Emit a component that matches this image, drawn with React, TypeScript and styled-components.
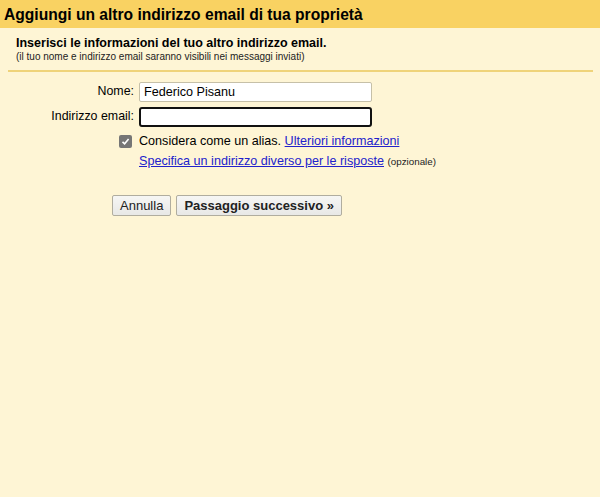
import * as React from "react"
import styled, { createGlobalStyle } from "styled-components"

const GlobalStyle = createGlobalStyle`
  html, body {
    margin: 0;
    padding: 0;
    background: #fef5d5;
    font-family: "Liberation Sans", Arial, sans-serif;
    color: #000;
  }
`

const Page = styled.div`
  width: 600px;
  height: 497px;
  background: #fef5d5;
  overflow: hidden;
`

const Header = styled.h1`
  margin: 0;
  height: 28px;
  padding: 0 4px;
  background: #f9d262;
  font-size: 15.6px;
  font-weight: 700;
  line-height: 30px;
  white-space: nowrap;
`

const Intro = styled.div`
  padding: 8px 16px 0;
`

const Subtitle = styled.h2`
  margin: 0;
  font-size: 12.5px;
  font-weight: 700;
  line-height: 15px;
`

const Note = styled.div`
  font-size: 10px;
  line-height: 12px;
  color: #222;
`

const Rule = styled.hr`
  margin: 7px 7px 0 8px;
  border: 0;
  height: 2px;
  background: #efd37a;
`

const Form = styled.div`
  display: grid;
  grid-template-columns: 127px 233px;
  column-gap: 5px;
  row-gap: 5px;
  padding: 10px 0 0 7px;
  align-items: center;
`

const Label = styled.label`
  font-size: 12.4px;
  text-align: right;
  line-height: 16px;
  align-self: start;
  padding-top: 1px;
`

const Input = styled.input<{ $focused?: boolean }>`
  box-sizing: border-box;
  width: 233px;
  height: 20px;
  margin: 0;
  padding: 1px 4px;
  font-family: "Liberation Sans", Arial, sans-serif;
  font-size: 12.6px;
  background: #fff;
  border: ${(p) => (p.$focused ? "2px solid #111" : "1px solid #c6c0a8")};
  border-radius: ${(p) => (p.$focused ? "3px" : "2px")};
  outline: none;
`

const CheckCell = styled.div`
  display: flex;
  justify-content: flex-end;
  padding-right: 2px;
  padding-top: 1px;
`

const Box = styled.span`
  display: flex;
  align-items: center;
  justify-content: center;
  width: 13px;
  height: 13px;
  border-radius: 2px;
  background: #767676;
`

const OptionText = styled.div<{ $top?: number }>`
  font-size: 12.6px;
  line-height: 15px;
  white-space: nowrap;
  padding-top: ${(p) => p.$top ?? 0}px;
`

const Link = styled.a`
  color: #2222cc;
  text-decoration: underline;
  cursor: pointer;
`

const Small = styled.span`
  font-size: 9.8px;
  color: #222;
`

const Actions = styled.div`
  display: flex;
  gap: 5px;
  padding: 26px 0 0 112px;
`

const Button = styled.button<{ $primary?: boolean }>`
  box-sizing: border-box;
  height: 21px;
  margin: 0;
  padding: 0 7px;
  font-family: "Liberation Sans", Arial, sans-serif;
  font-size: 13px;
  font-weight: ${(p) => (p.$primary ? 700 : 400)};
  color: #222;
  background: linear-gradient(#f6f6f4, #e8e8e6);
  border: 1px solid #b0ad9f;
  border-radius: 2px;
`

export default function App() {
  return (
    <Page>
      <GlobalStyle />
      <Header>Aggiungi un altro indirizzo email di tua proprietà</Header>
      <Intro>
        <Subtitle>Inserisci le informazioni del tuo altro indirizzo email.</Subtitle>
        <Note>(il tuo nome e indirizzo email saranno visibili nei messaggi inviati)</Note>
      </Intro>
      <Rule />
      <Form>
        <Label>Nome:</Label>
        <Input defaultValue="Federico Pisanu" />
        <Label>Indirizzo email:</Label>
        <Input $focused />
        <CheckCell>
          <Box>
            <svg width="9" height="9" viewBox="0 0 9 9">
              <path d="M1.5 4.8 L3.6 6.8 L7.6 2" fill="none" stroke="#fff" strokeWidth="1.6" />
            </svg>
          </Box>
        </CheckCell>
        <OptionText $top={2}>
          Considera come un alias. <Link>Ulteriori informazioni</Link>
        </OptionText>
        <span />
        <OptionText $top={0}>
          <Link>Specifica un indirizzo diverso per le risposte</Link> <Small>(opzionale)</Small>
        </OptionText>
      </Form>
      <Actions>
        <Button>Annulla</Button>
        <Button $primary>Passaggio successivo »</Button>
      </Actions>
    </Page>
  )
}
